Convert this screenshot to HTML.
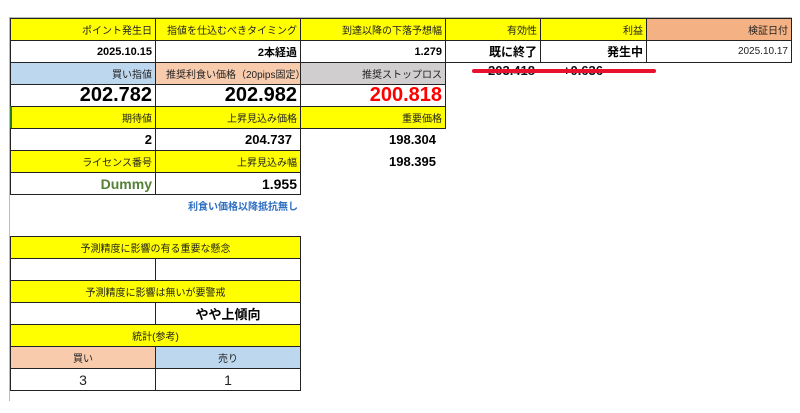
<!DOCTYPE html>
<html><head><meta charset="utf-8"><style>
body{margin:0;width:800px;height:413px;background:#fff;position:relative;overflow:hidden;font-family:"Liberation Sans","Noto Sans CJK JP",sans-serif;}
.c{position:absolute;box-sizing:border-box;display:flex;align-items:center;justify-content:flex-end;padding-right:3px;font-size:10px;color:#222;white-space:nowrap;}
.y{background:#ffff00;}
.b{border:1px solid #222;}
.big{font-size:20px;font-weight:bold;color:#000;}
.m{font-size:11px;font-weight:bold;color:#000;}
.ctr{justify-content:center;padding:0;}
</style></head><body>
<div style="position:absolute;left:9px;top:17px;width:1px;height:384px;background:#bbb"></div>
<div style="position:absolute;left:9px;top:17px;width:783px;height:1px;background:#bbb"></div>
<div class="c y b" style="left:10px;top:18px;width:146px;height:23px">ポイント発生日</div>
<div class="c y b" style="left:155px;top:18px;width:146px;height:23px">指値を仕込むべきタイミング</div>
<div class="c y b" style="left:300px;top:18px;width:146px;height:23px">到達以降の下落予想幅</div>
<div class="c y b" style="left:445px;top:18px;width:96px;height:23px">有効性</div>
<div class="c y b" style="left:540px;top:18px;width:107px;height:23px">利益</div>
<div class="c b" style="left:646px;top:18px;width:146px;height:23px;background:#f4b183">検証日付</div>
<div class="c b m" style="left:10px;top:40px;width:146px;height:23px">2025.10.15</div>
<div class="c b m" style="left:155px;top:40px;width:146px;height:23px">2本経過</div>
<div class="c b m" style="left:300px;top:40px;width:146px;height:23px">1.279</div>
<div class="c b m" style="left:445px;top:40px;width:96px;height:23px;font-size:12px">既に終了</div>
<div class="c b m" style="left:540px;top:40px;width:107px;height:23px;font-size:12px">発生中</div>
<div class="c b" style="left:646px;top:40px;width:146px;height:23px">2025.10.17</div>
<div class="c b" style="left:10px;top:62px;width:146px;height:23px;background:#bdd7ee">買い指値</div>
<div class="c b" style="left:155px;top:62px;width:146px;height:23px;background:#f8cbad;justify-content:flex-start;padding-left:10px">推奨利食い価格（20pips固定）</div>
<div class="c b" style="left:300px;top:62px;width:146px;height:23px;background:#d0cece">推奨ストップロス</div>
<div class="c m" style="left:445px;top:60px;width:96px;height:20px;font-size:13px;color:#111;padding-right:6px">203.418</div>
<div class="c m" style="left:540px;top:60px;width:66px;height:20px;font-size:13px;color:#111">+0.636</div>
<div style="position:absolute;left:472px;top:69px;width:184px;height:4px;background:#e8112d;border-radius:2px"></div>
<div class="c b big" style="left:10px;top:84px;width:146px;height:23px">202.782</div>
<div class="c b big" style="left:155px;top:84px;width:146px;height:23px">202.982</div>
<div class="c b big" style="left:300px;top:84px;width:146px;height:23px;color:#ff0000">200.818</div>
<div class="c y b" style="left:10px;top:106px;width:146px;height:23px;border-left:2px solid #2a7a2a">期待値</div>
<div class="c y b" style="left:155px;top:106px;width:146px;height:23px">上昇見込み価格</div>
<div class="c y b" style="left:300px;top:106px;width:146px;height:23px">重要価格</div>
<div class="c b m" style="left:10px;top:128px;width:146px;height:23px;font-size:13px">2</div>
<div class="c b m" style="left:155px;top:128px;width:146px;height:23px;font-size:13px;padding-right:8px">204.737</div>
<div class="c m" style="left:300px;top:128px;width:146px;height:22px;font-size:13px;padding-right:10px">198.304</div>
<div class="c y b" style="left:10px;top:150px;width:146px;height:23px">ライセンス番号</div>
<div class="c y b" style="left:155px;top:150px;width:146px;height:23px">上昇見込み幅</div>
<div class="c m" style="left:300px;top:150px;width:146px;height:22px;font-size:13px;padding-right:10px">198.395</div>
<div class="c b m" style="left:10px;top:172px;width:146px;height:23px;font-size:14px;color:#538135">Dummy</div>
<div class="c b m" style="left:155px;top:172px;width:146px;height:23px;font-size:14px">1.955</div>
<div class="c m" style="left:155px;top:195px;width:146px;height:20px;font-size:10px;color:#2f6fc0">利食い価格以降抵抗無し</div>
<div class="c y b ctr" style="left:10px;top:236px;width:291px;height:23px">予測精度に影響の有る重要な懸念</div>
<div class="c b" style="left:10px;top:258px;width:146px;height:23px"></div>
<div class="c b" style="left:155px;top:258px;width:146px;height:23px"></div>
<div class="c y b ctr" style="left:10px;top:280px;width:291px;height:23px">予測精度に影響は無いが要警戒</div>
<div class="c b" style="left:10px;top:302px;width:146px;height:23px"></div>
<div class="c b ctr m" style="left:155px;top:302px;width:146px;height:23px;font-size:13px">やや上傾向</div>
<div class="c y b ctr" style="left:10px;top:324px;width:291px;height:23px">統計(参考)</div>
<div class="c b ctr" style="left:10px;top:346px;width:146px;height:23px;background:#f8cbad">買い</div>
<div class="c b ctr" style="left:155px;top:346px;width:146px;height:23px;background:#bdd7ee">売り</div>
<div class="c b ctr" style="left:10px;top:368px;width:146px;height:23px;font-size:14px">3</div>
<div class="c b ctr" style="left:155px;top:368px;width:146px;height:23px;font-size:14px">1</div>
</body></html>
